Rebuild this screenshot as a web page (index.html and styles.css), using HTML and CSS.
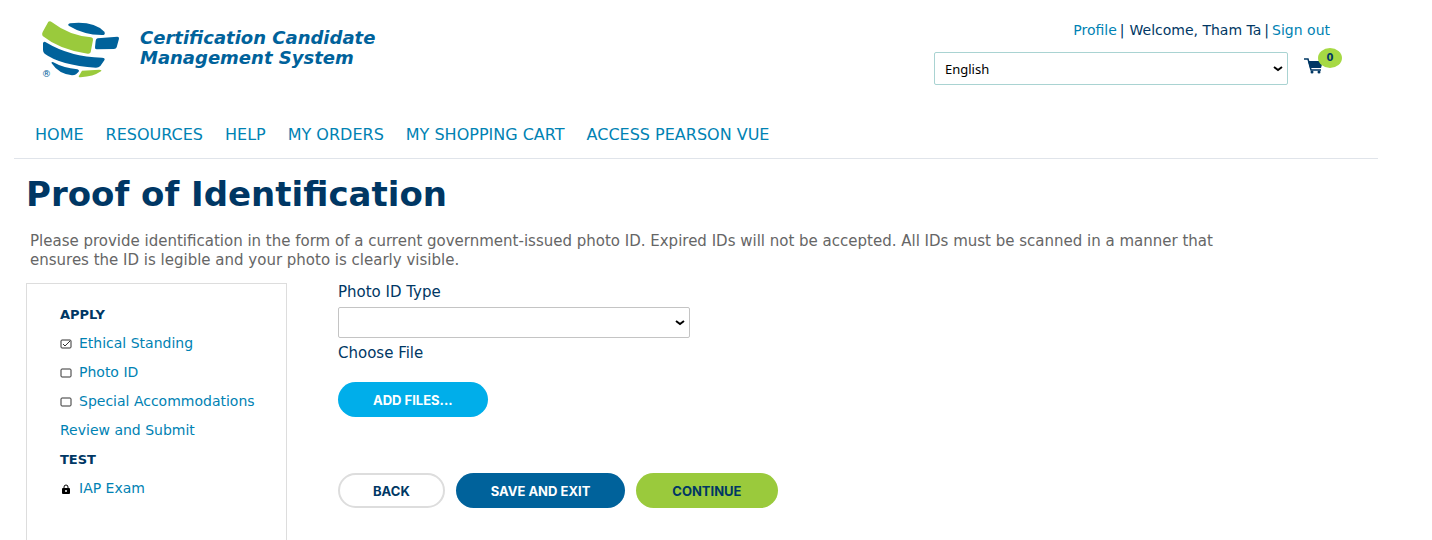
FILE: index.html
```
<!DOCTYPE html>
<html lang="en">
  <head>
    <meta charset="utf-8">
    <meta name="viewport" content="width=device-width,initial-scale=1.0">
    <title>Proof of Identification</title>
    <link rel="stylesheet" href="styles.css">
  </head>
  <body>
    <header class="header">
      <a class="brand" href="#">
        <svg class="brand-logo" viewBox="30 30 246 174" aria-hidden="true">
          <g fill="#9aca3c">
            <path d="M55 35Q60 31 66 37Q118 77 183 82Q190 83 189 90L182 127Q180 132 173 131Q90 120 38 78Q34 74 38 66Z"/>
            <path d="M156 182L208 179Q217 179 213 184Q190 200 152 202Q144 202 147 197Z"/>
          </g>
          <g fill="#00629b">
            <path d="M116 47Q112 42 120 40Q190 32 223 65Q228 75 216 75Q160 74 116 47Z"/>
            <path d="M203 85L262 80Q268 80 267 86L260 112Q258 117 252 117L200 118Q194 118 195 112L197 92Q198 86 203 85Z"/>
            <path d="M39 100Q40 92 50 98Q120 140 216 143Q227 144 223 151L211 168Q206 173 198 173Q90 165 44 131Q39 127 39 120Z"/>
            <path d="M65 160Q63 154 70 157Q100 174 142 178Q149 180 146 185L138 193Q134 196 126 196Q86 192 65 160Z"/>
            <text class="brand-mark" x="35" y="200">®</text>
          </g>
        </svg>
        <span class="brand-name">Certification Candidate<br>Management System</span>
      </a>
      <div class="tools">
        <div class="account">
          <a href="#">Profile</a><span>|</span><span class="welcome">Welcome, Tham Ta</span><span>|</span><a href="#">Sign out</a>
        </div>
        <div class="tools-row">
          <select class="select language" aria-label="Language">
            <option>English</option>
          </select>
          <a class="cart" href="#" aria-label="Shopping cart">
            <svg class="cart-icon" viewBox="0 0 20 16" aria-hidden="true">
              <path d="M0 1H4L7 12H17" fill="none" stroke="#003764" stroke-width="1.5"/>
              <path d="M4 3H19L17 10H6Z" fill="#003764"/>
              <circle cx="8" cy="14" r="1.5" fill="#003764"/>
              <circle cx="15" cy="14" r="1.5" fill="#003764"/>
            </svg>
            <span class="cart-count">0</span>
          </a>
        </div>
      </div>
    </header>

    <nav class="nav">
      <a href="#">HOME</a>
      <a href="#">RESOURCES</a>
      <a href="#">HELP</a>
      <a href="#">MY ORDERS</a>
      <a href="#">MY SHOPPING CART</a>
      <a href="#">ACCESS PEARSON VUE</a>
    </nav>

    <main class="main">
      <h1>Proof of Identification</h1>
      <p class="intro">Please provide identification in the form of a current government-issued photo ID. Expired IDs will not be accepted. All IDs must be scanned in a manner that ensures the ID is legible and your photo is clearly visible.</p>

      <div class="columns">
        <aside class="steps">
          <h2>APPLY</h2>
          <ul>
            <li>
              <svg class="step-icon" viewBox="0 0 12 10" aria-hidden="true"><rect x="1" y="1" width="10" height="8" rx="1"/><path d="M3 5L5 7L10 2"/></svg>
              <a href="#">Ethical Standing</a>
            </li>
            <li>
              <svg class="step-icon" viewBox="0 0 12 10" aria-hidden="true"><rect x="1" y="1" width="10" height="8" rx="1"/></svg>
              <a href="#">Photo ID</a>
            </li>
            <li>
              <svg class="step-icon" viewBox="0 0 12 10" aria-hidden="true"><rect x="1" y="1" width="10" height="8" rx="1"/></svg>
              <a href="#">Special Accommodations</a>
            </li>
            <li><a href="#">Review and Submit</a></li>
          </ul>
          <h2>TEST</h2>
          <ul>
            <li>
              <svg class="step-icon lock" viewBox="0 0 12 10" aria-hidden="true"><path d="M4 5V3Q4 1 6 1T8 3V5"/><rect x="2" y="4" width="8" height="6" rx="1"/><circle cx="6" cy="7" r="1"/></svg>
              <a href="#">IAP Exam</a>
            </li>
          </ul>
        </aside>

        <form class="form">
          <label for="id-type">Photo ID Type</label>
          <select class="select id-type" id="id-type">
            <option></option>
          </select>
          <span class="file-label" id="file-label">Choose File</span>
          <button type="button" class="btn btn-add" aria-describedby="file-label">ADD FILES...</button>
          <div class="actions">
            <button type="button" class="btn btn-back">BACK</button>
            <button type="button" class="btn btn-save">SAVE AND EXIT</button>
            <button type="submit" class="btn btn-continue">CONTINUE</button>
          </div>
        </form>
      </div>
    </main>
  </body>
</html>
```
FILE: styles.css
```
* { box-sizing: border-box; }

body {
  margin: 0 54px 0 14px;
  background: #fff;
  color: #003764;
  font-family: "DejaVu Sans", Verdana, sans-serif;
  font-size: 14px;
  overflow-x: hidden;
}

a { color: #0082b3; text-decoration: none; }
a:hover { text-decoration: underline; }

.header {
  display: flex;
  justify-content: space-between;
  align-items: flex-start;
  padding: 20px 36px 0 26px;
}

.brand { display: flex; align-items: flex-start; gap: 18px; }
.brand-logo { width: 82px; height: 58px; }
.brand-mark { font-size: 28px; }
.brand-name {
  padding-top: 8px;
  color: #00629b;
  font-size: 18px;
  line-height: 20px;
  font-weight: 700;
  font-style: italic;
}

.tools { width: 408px; }
.account {
  display: flex;
  justify-content: flex-end;
  gap: 3px;
  padding-right: 12px;
  line-height: 20px;
}
.welcome { padding-left: 2px; }
.tools-row { display: flex; align-items: flex-start; gap: 16px; padding-top: 12px; }

.select {
  appearance: none;
  height: 31px;
  padding: 0 10px;
  border: 1px solid #c4c4c4;
  border-radius: 2px;
  background: #fff url("data:image/svg+xml,%3Csvg xmlns='http://www.w3.org/2000/svg' width='10' height='6'%3E%3Cpath d='M1 1L5 4L9 1' fill='none' stroke='black' stroke-width='2'/%3E%3C/svg%3E") no-repeat right 4px center;
  color: #000;
  font-family: "Noto Sans", sans-serif;
  font-size: 13px;
}
.language { flex: 1; height: 33px; border-color: #a9d3d2; }

.cart { display: flex; position: relative; width: 38px; height: 33px; padding-top: 6px; }
.cart-icon { width: 20px; height: 16px; }
.cart-count {
  position: absolute;
  top: -4px;
  right: 0;
  width: 24px;
  height: 20px;
  border-radius: 50%;
  background: #a6d944;
  color: #003764;
  font-size: 10px;
  line-height: 19px;
  font-weight: 700;
  text-align: center;
}

.nav {
  display: flex;
  gap: 22px;
  margin-top: 40px;
  padding: 0 21px 13px;
  border-bottom: 1px solid #e0e4ea;
  font-size: 16px;
  line-height: 20px;
}

.main { padding: 0 12px; }

h1 { margin: 14px 0 0; font-size: 34px; line-height: 42px; font-weight: 700; }

.intro {
  max-width: 1200px;
  margin: 17px 0 13px;
  padding-left: 4px;
  color: #666;
  font-size: 15px;
  line-height: 19px;
}

.columns { display: flex; align-items: flex-start; gap: 51px; }

.steps {
  width: 261px;
  min-height: 257px;
  padding: 16px 20px 16px 33px;
  border: 1px solid #ddd;
  border-bottom: 0;
}
.steps h2 { margin: 0; font-size: 13px; line-height: 29px; font-weight: 700; }
.steps ul { margin: 0; padding: 0; list-style: none; }
.steps li { display: flex; align-items: center; gap: 7px; line-height: 29px; }
.step-icon { flex: none; width: 12px; height: 10px; fill: none; stroke: #333; }
.lock rect { fill: #000; stroke: none; }
.lock circle { fill: #fff; stroke: none; }
.lock path { stroke: #000; }

.form { display: flex; flex-direction: column; align-items: flex-start; font-size: 15px; line-height: 18px; }
.id-type { width: 352px; margin: 6px 0; }
.btn {
  height: 35px;
  padding: 0 35px;
  border: 0;
  border-radius: 18px;
  color: #fff;
  font-family: Inter, "Liberation Sans", sans-serif;
  font-size: 13px;
  font-weight: 700;
  cursor: pointer;
}
.btn-add { margin-top: 20px; background: #00aeea; }
.actions { display: flex; gap: 11px; margin-top: 56px; }
.btn-back { border: 2px solid #ddd; padding: 0 33px; background: #fff; color: #003764; }
.btn-save { background: #00629b; }
.btn-continue { padding: 0 36px; background: #9aca3c; color: #003764; }
```
